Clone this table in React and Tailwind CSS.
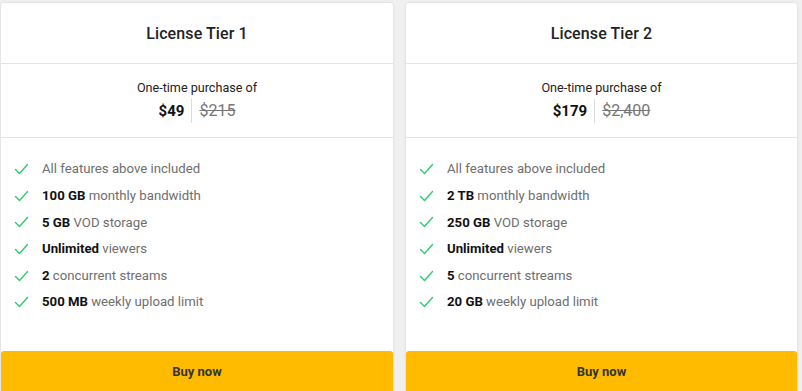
import React from "react";

const Check = () => (
  <svg width="15" height="12" viewBox="0 0 15 12" fill="none" className="shrink-0">
    <polyline points="1.5 6.5 5.5 10.5 13.5 1.5" stroke="#2ecc71" strokeWidth="1.4" strokeLinecap="round" strokeLinejoin="round" />
  </svg>
);

const tiers = [
  {
    title: "License Tier 1",
    price: "$49",
    old: "$215",
    features: [
      [null, "All features above included"],
      ["100 GB", " monthly bandwidth"],
      ["5 GB", " VOD storage"],
      ["Unlimited", " viewers"],
      ["2", " concurrent streams"],
      ["500 MB", " weekly upload limit"],
    ],
    w: "w-[392px]",
  },
  {
    title: "License Tier 2",
    price: "$179",
    old: "$2,400",
    features: [
      [null, "All features above included"],
      ["2 TB", " monthly bandwidth"],
      ["250 GB", " VOD storage"],
      ["Unlimited", " viewers"],
      ["5", " concurrent streams"],
      ["20 GB", " weekly upload limit"],
    ],
    w: "w-[391px]",
  },
];

function Card({ t }) {
  return (
    <div className={`${t.w} shrink-0 bg-white rounded-t-[3px] shadow-[0_0_3px_rgba(0,0,0,0.12)] flex flex-col`}>
      <div className="h-[61px] flex items-center justify-center border-b border-[#e4e4e4] pt-[2px]">
        <span className="text-[16px] font-medium text-[#222] tracking-[0.1px]">{t.title}</span>
      </div>
      <div className="h-[74px] flex flex-col items-center border-b border-[#e4e4e4] pt-[15px]">
        <div className="text-[12.6px] leading-[18px] text-[#222]">One-time purchase of</div>
        <div className="flex items-center mt-[2px] h-[24px]">
          <span className="text-[15px] font-bold text-[#111]">{t.price}</span>
          <span className="w-px h-[24px] bg-[#dcdcdc] mx-[7px]" />
          <span className="text-[16px] text-[#777] line-through decoration-[#777]">{t.old}</span>
        </div>
      </div>
      <ul className="flex flex-col pt-[18px] pl-[13px] h-[213px]">
        {t.features.map(([b, r], i) => (
          <li key={i} className="flex items-center h-[26.6px]">
            <Check />
            <span className="ml-[13px] text-[13.2px] text-[#6e6e6e]">
              {b && <b className="font-bold text-[#111]">{b}</b>}
              {r}
            </span>
          </li>
        ))}
      </ul>
      <button className="h-[44px] bg-[#ffbb00] rounded-t-[3px] text-[13px] font-bold text-[#333] flex items-start justify-center pt-[11px]">
        Buy now
      </button>
    </div>
  );
}

export default function App() {
  return (
    <div className="h-[391px] w-[802px] overflow-hidden bg-[#f0f0f0] font-['Roboto',sans-serif]">
      <div className="flex gap-[13px] pl-[1px] pt-[3px]">
        {tiers.map((t) => (
          <Card key={t.title} t={t} />
        ))}
      </div>
    </div>
  );
}
